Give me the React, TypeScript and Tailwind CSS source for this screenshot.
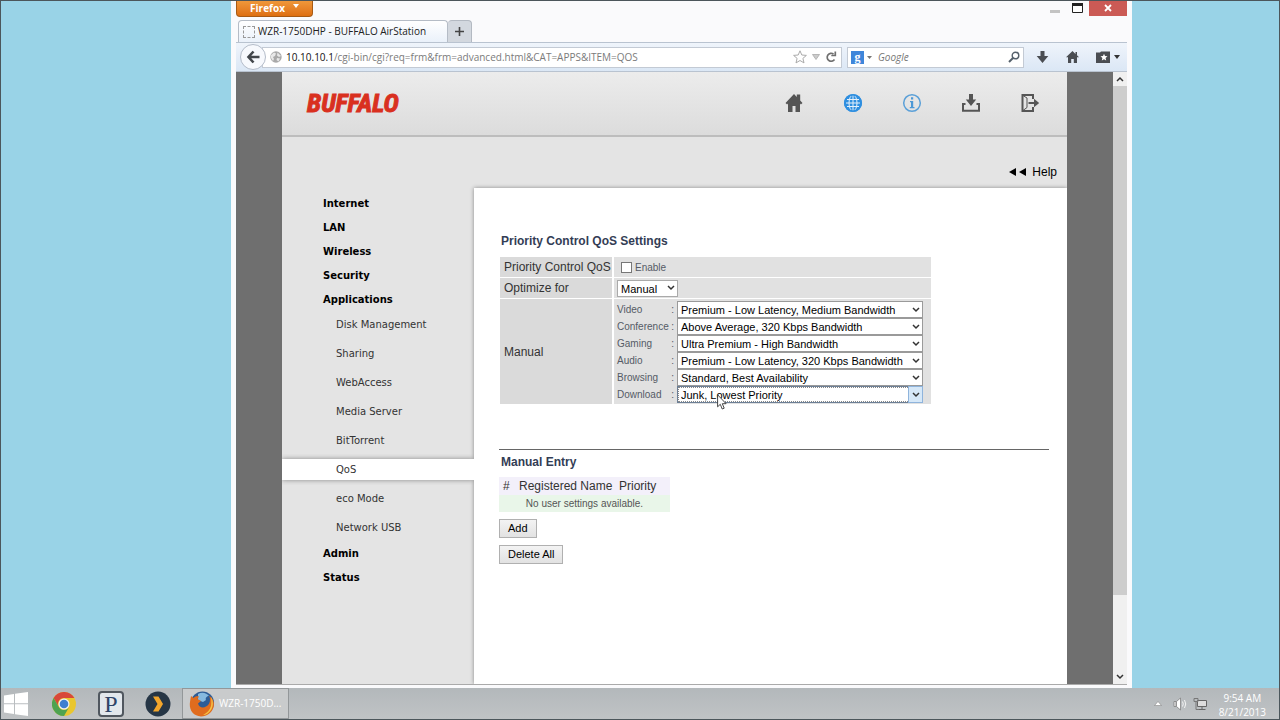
import React from "react";

const ui = "font-['Open_Sans','Noto_Sans',sans-serif]";
const sans = "font-['Liberation_Sans',Arial,sans-serif]";

function Chevron() {
  return (
    <svg viewBox="0 0 8 6" className="h-[6px] w-2" fill="none" stroke="#333" strokeWidth="1.5" aria-hidden="true">
      <path d="M1 1l3 3 3-3" />
    </svg>
  );
}

function TitleBar() {
  return (
    <div className="flex h-5 items-start justify-between">
      <button className="flex h-[17px] w-[77px] items-center justify-center gap-2 rounded-b-sm border border-t-0 border-[#a85a14] bg-linear-to-b from-[#f09a3c] to-[#de6f10] text-[10px] font-bold text-white">
        Firefox
        <svg viewBox="0 0 6 4" className="mb-1 h-1 w-[6px]" fill="#fff" aria-hidden="true">
          <path d="M0 0h6L3 4z" />
        </svg>
      </button>
      <div className="flex h-4 items-stretch">
        <button aria-label="Minimize" className="flex w-5 items-end justify-center pb-[3px]">
          <svg viewBox="0 0 10 3" className="h-[3px] w-[10px]" aria-hidden="true"><path d="M0 0h10v3H0z" fill="#c3c3c3" /></svg>
        </button>
        <button aria-label="Maximize" className="flex w-6 items-center justify-center">
          <svg viewBox="0 0 11 10" className="h-[10px] w-[11px]" aria-hidden="true">
            <path d="M.5.5h10v9H.5z" fill="#fff" stroke="#222" />
            <path d="M0 0h11v3H0z" fill="#222" />
          </svg>
        </button>
        <button aria-label="Close" className="flex w-[38px] items-center justify-center bg-[#cb5a55]">
          <svg viewBox="0 0 8 8" className="h-2 w-2" stroke="#fff" strokeWidth="1.8" aria-hidden="true"><path d="M1 1l6 6M7 1L1 7" /></svg>
        </button>
      </div>
    </div>
  );
}

function TabStrip() {
  return (
    <div className="flex h-[22px] items-end pl-[2px]">
      <div className="flex h-[22px] w-[210px] items-center gap-[3px] rounded-t-sm border border-b-0 border-[#b5bcc6] bg-linear-to-b from-white to-[#eaf1fa] pl-1 text-[10px] text-[#222]">
        <span className="h-3 w-3 border border-dashed border-[#999]" />
        WZR-1750DHP - BUFFALO AirStation
      </div>
      <button aria-label="New tab" className="flex h-[22px] w-6 items-center justify-center rounded-t-sm border border-b-0 border-l-0 border-[#b3b9c2] bg-[#d3d8df]">
        <svg viewBox="0 0 9 9" className="h-[9px] w-[9px]" stroke="#444" strokeWidth="1.6" aria-hidden="true"><path d="M0 4.500H9M4.500 0V9" /></svg>
      </button>
    </div>
  );
}

function NavBar() {
  return (
    <div className="flex h-[30px] items-center border-t border-b border-[#b9c3d0] bg-linear-to-b from-[#eff4fb] to-[#dbe7f5] pr-[7px] pl-1">
      <button aria-label="Back" className="z-10 flex h-[26px] w-[26px] items-center justify-center rounded-full border border-[#b4bcc9] bg-[#f7f9fd]">
        <svg viewBox="0 0 14 14" className="h-[14px] w-[14px]" fill="none" stroke="#42464b" strokeWidth="2.6" aria-hidden="true">
          <path d="M7.500 1.500L2.500 7l5 5.500M3 7h10.500" />
        </svg>
      </button>
      <div className="-ml-1 flex h-[21px] flex-1 items-center border border-[#c3cad4] bg-white pr-1 pl-[7px]">
        <svg viewBox="0 0 12 12" className="h-3 w-3" aria-hidden="true">
          <circle cx="6" cy="6" r="5.700" fill="#a9a9a9" />
          <path d="M1 4l3-2.500 2 1L5 5 3 6l1 2-1 2-2-3zM7.500 1.500L11 5 9 6 7 4.500zM7 7l3 .5-1.500 3L6.500 9z" fill="#e8e8e8" />
        </svg>
        <span className="ml-1 flex-1 truncate text-[10px] text-[#7b7b7b]">
          <span className="text-[#111]">10.10.10.1</span>/cgi-bin/cgi?req=frm&amp;frm=advanced.html&amp;CAT=APPS&amp;ITEM=QOS
        </span>
        <span className="flex items-center gap-[5px]">
          <svg viewBox="0 0 14 14" className="h-[14px] w-[14px]" fill="none" stroke="#aaa" aria-hidden="true">
            <path d="M7 .8l1.800 4.200 4.600.4-3.500 3 1.100 4.500L7 10.500l-4 2.400 1.100-4.500-3.500-3 4.600-.4z" />
          </svg>
          <svg viewBox="0 0 8 6" className="h-[6px] w-2" fill="#ccc" stroke="#aaa" strokeWidth=".8" aria-hidden="true"><path d="M.5.5h7L4 5.500z" /></svg>
          <svg viewBox="0 0 12 12" className="h-3 w-3" fill="none" stroke="#707070" strokeWidth="1.700" aria-hidden="true">
            <path d="M9.500 8.500A4 4 0 1 1 8.500 3M10.300.5v4H6.300" />
          </svg>
        </span>
      </div>
      <div className="ml-[5px] flex h-[21px] w-[177px] items-center border border-[#c3cad4] bg-white px-[3px]">
        <span className="flex h-[13px] w-[13px] items-center justify-center bg-[#3f86da] font-['Liberation_Serif',serif] text-[12px] leading-none font-bold text-white">g</span>
        <svg viewBox="0 0 5 3" className="ml-[3px] h-[3px] w-[5px]" fill="#777" aria-hidden="true"><path d="M0 0h5L2.500 3z" /></svg>
        <input aria-label="Search" placeholder="Google" className="ml-[6px] min-w-0 flex-1 bg-transparent text-[10px] text-[#555] italic outline-none placeholder:text-[#777]" />
        <svg viewBox="0 0 12 12" className="h-3 w-3" fill="none" stroke="#55606b" aria-hidden="true">
          <circle cx="7.500" cy="4.500" r="3.300" strokeWidth="1.400" />
          <path d="M5 7l-4 4" strokeWidth="2" />
        </svg>
      </div>
      <div className="ml-3 flex items-center gap-[17px] text-[#4a4d52]">
        <svg viewBox="0 0 12 12" className="h-3 w-[13px]" fill="currentColor" aria-hidden="true"><path d="M4 0h4v5h3.800L6 12 .2 5H4z" /></svg>
        <svg viewBox="0 0 13 12" className="h-3 w-[13px]" fill="currentColor" aria-hidden="true"><path d="M6.500 0L0 6.300h2V12h3.200V8h2.600v4H11V6.300h2L11 4.300V1H9.500v2z" /></svg>
        <span className="flex items-center gap-1">
          <svg viewBox="0 0 14 12" className="h-3 w-[14px]" aria-hidden="true">
            <path d="M0 1.500h4l1-1h9V12H0z" fill="#4a4d52" />
            <path d="M8 2.800l1 2.300 2.500.2-1.900 1.700.6 2.500L8 8.200 5.800 9.500l.6-2.500-1.900-1.700 2.500-.2z" fill="#fff" />
          </svg>
          <svg viewBox="0 0 6 4" className="h-1 w-[6px]" fill="#333" aria-hidden="true"><path d="M0 0h6L3 4z" /></svg>
        </span>
      </div>
    </div>
  );
}

function PageHeader() {
  return (
    <header className="flex h-[65px] items-center justify-between border-b-2 border-[#bdbdbd] bg-linear-to-b from-[#ececec] to-[#dcdcdc] pr-[27px] pb-px pl-[25px]">
      <span className="font-['Liberation_Sans_Narrow','Roboto_Condensed',sans-serif] text-[26px] leading-none font-bold text-[#d9301f] italic [-webkit-text-stroke:1px_#d9301f]">BUFFALO</span>
      <nav className="flex items-center gap-[39px] text-[#555]">
        <a href="#home" aria-label="Home">
          <svg viewBox="0 0 20 20" className="h-5 w-5" fill="currentColor" aria-hidden="true"><path d="M10 1L1.500 10l1.600 1.400L4 10.500V19h4.500v-6h3v6H16v-8.500l.9.900 1.600-1.400-2.300-2.500V1.500h-3.400v2.400z" /></svg>
        </a>
        <a href="#internet" aria-label="Internet">
          <svg viewBox="0 0 20 20" className="h-5 w-5" fill="none" aria-hidden="true">
            <circle cx="10" cy="10" r="9" fill="#2f8fe0" />
            <g stroke="#e4f0fb" strokeWidth="1"><ellipse cx="10" cy="10" rx="4" ry="8" /><path d="M10 2v16M3 10h14M4 6.500h12M4 13.500h12" /></g>
            <circle cx="10" cy="10" r="8.200" stroke="#2f8fe0" strokeWidth="1.800" />
          </svg>
        </a>
        <a href="#info" aria-label="Information">
          <svg viewBox="0 0 20 20" className="h-5 w-5" fill="none" aria-hidden="true">
            <circle cx="10" cy="10" r="8.300" stroke="#5ba0d8" strokeWidth="1.500" />
            <path d="M9 4.300h2.200v2.200H9zM8 8h3.200v6H12.500v1.200H7.800V14H9V9.200H8z" fill="#4c98d6" />
          </svg>
        </a>
        <a href="#save" aria-label="Save">
          <svg viewBox="0 0 20 20" className="h-5 w-5" aria-hidden="true">
            <path d="M8 1h4v5.500h3.200L10 13 4.800 6.500H8z" fill="currentColor" />
            <path d="M4.500 11H2v6.800h16V11h-2.500" fill="none" stroke="currentColor" strokeWidth="2" />
          </svg>
        </a>
        <a href="#logout" aria-label="Log out">
          <svg viewBox="0 0 20 20" className="h-5 w-5" fill="none" stroke="currentColor" strokeWidth="2" aria-hidden="true">
            <path d="M13 6V2H2.500v16H13v-4" />
            <path d="M3 2.500l4 2.500v9.500L3 17.500" strokeWidth="1" />
            <path d="M8.500 10H16" />
            <path d="M14 5.800l5.200 4.200-5.200 4.200z" fill="currentColor" stroke="none" />
          </svg>
        </a>
      </nav>
    </header>
  );
}

const appItems = ["Disk Management", "Sharing", "WebAccess", "Media Server", "BitTorrent", "QoS", "eco Mode", "Network USB"];

function MainLink({ label }: { label: string }) {
  return (
    <li className="flex h-6 items-center pl-[41px] font-bold text-black">
      <a href={"#" + label}>{label}</a>
    </li>
  );
}

function Sidebar() {
  return (
    <nav className="w-48 shrink-0 pt-[3px] font-['DejaVu_Sans',Verdana,sans-serif] text-[10px]">
      <ul>
        {["Internet", "LAN", "Wireless", "Security", "Applications"].map((l) => <MainLink key={l} label={l} />)}
        <li>
          <ul className="flex flex-col gap-2 py-[3px]">
            {appItems.map((l) => (
              <li
                key={l}
                className={
                  l === "QoS"
                    ? "relative z-10 flex h-[21px] items-center bg-white pl-[54px] text-[#333] shadow-[0_0_5px_#888] [clip-path:inset(-5px_0_-5px_0)]"
                    : "flex h-[21px] items-center pl-[54px] text-[#333]"
                }
              >
                <a href={"#" + l}>{l}</a>
              </li>
            ))}
          </ul>
        </li>
        <MainLink label="Admin" />
        <MainLink label="Status" />
      </ul>
    </nav>
  );
}

const levels = [
  "Premium - Low Latency, Medium Bandwidth",
  "Above Average, 320 Kbps Bandwidth",
  "Ultra Premium - High Bandwidth",
  "Premium - Low Latency, 320 Kbps Bandwidth",
  "Standard, Best Availability",
  "Junk, Lowest Priority",
];
const classes = ["Video", "Conference", "Gaming", "Audio", "Browsing", "Download"];

function Pointer() {
  return (
    <svg viewBox="0 0 10 16" className="absolute top-2 left-10 h-4 w-[10px]" fill="#fff" stroke="#333" strokeWidth=".9" aria-hidden="true">
      <path d="M.6.800v12l2.700-2.500 1.900 4.700 2-.8-1.900-4.500h3.800z" />
    </svg>
  );
}

function ClassRow({ name, index }: { name: string; index: number }) {
  const focused = name === "Download";
  return (
    <div className="flex h-[17px] items-center">
      <label htmlFor={name} className="flex w-[60px] justify-between pr-[3px] text-[10px] text-[#555b66]">
        <span>{name}</span>
        <span>:</span>
      </label>
      <div className="relative w-[246px]">
        <select
          id={name}
          defaultValue={levels[index]}
          className={
            focused
              ? "block h-[17px] w-full appearance-none border border-[#6c7f96] bg-white pb-px pl-[3px] text-[11px] text-black outline-1 -outline-offset-2 outline-dotted outline-[#888]"
              : "block h-[17px] w-full appearance-none border border-[#9a9a9a] bg-white pb-px pl-[3px] text-[11px] text-black"
          }
        >
          {levels.map((o) => <option key={o}>{o}</option>)}
        </select>
        <span
          className={
            focused
              ? "pointer-events-none absolute inset-y-0 right-0 flex w-[15px] items-center justify-center border border-[#8fb4dc] bg-[#d6e8f8]"
              : "pointer-events-none absolute inset-y-0 right-0 flex w-[15px] items-center justify-center"
          }
        >
          <Chevron />
        </span>
        {focused && <Pointer />}
      </div>
    </div>
  );
}

const formButton = "border border-[#b0b0b0] bg-linear-to-b from-[#f3f3f3] to-[#e2e2e2] px-2 text-[11px] text-black h-[19px] leading-none";

function Settings() {
  return (
    <main className="min-w-0 flex-1 bg-white pt-[44px] pr-[18px] pl-[25px] text-[#333] shadow-[0_0_4px_#888] [clip-path:inset(-5px_0_0_-5px)]">
      <h2 className="pl-[2px] text-[12px] leading-[18px] font-bold text-[#333d55]">Priority Control QoS Settings</h2>
      <table className="-ml-px mt-[6px] w-[435px] border-separate border-spacing-x-[2px] border-spacing-y-px text-[12px]">
        <tbody>
          <tr className="h-5">
            <th scope="row" className="w-[112px] bg-[#dadada] py-0 pr-0 pl-1 text-left font-normal whitespace-nowrap">Priority Control QoS</th>
            <td className="bg-[#e1e1e1] py-0 pl-[7px]">
              <label className="flex items-center gap-[3px] text-[10px] text-[#555b66]">
                <input type="checkbox" className="h-[11px] w-[11px] appearance-none border border-[#777] bg-white" />
                Enable
              </label>
            </td>
          </tr>
          <tr className="h-5">
            <th scope="row" className="bg-[#dadada] py-0 pl-1 text-left font-normal"><label htmlFor="optimize">Optimize for</label></th>
            <td className="bg-[#e1e1e1] py-px pl-[3px]">
              <div className="relative w-[61px]">
                <select id="optimize" className="block h-[17px] w-full appearance-none border border-[#aaa] bg-white pb-px pl-[3px] text-[11px] text-black">
                  <option>Manual</option>
                </select>
                <span className="pointer-events-none absolute inset-y-0 right-0 flex w-[15px] items-center justify-center"><Chevron /></span>
              </div>
            </td>
          </tr>
          <tr>
            <th scope="row" className="bg-[#dadada] pl-1 text-left font-normal">Manual</th>
            <td className="bg-[#e1e1e1] pt-[2px] pb-px pl-[3px]">
              {classes.map((c, i) => <ClassRow key={c} name={c} index={i} />)}
            </td>
          </tr>
        </tbody>
      </table>
      <hr className="mt-[44px] border-t border-[#666]" />
      <h2 className="mt-[3px] pl-[2px] text-[12px] leading-[18px] font-bold text-[#333d55]">Manual Entry</h2>
      <table className="mt-[6px] w-[171px] table-fixed border-collapse">
        <thead>
          <tr className="h-[18px] bg-[#f3f0fa] text-left text-[12px]">
            <th className="w-5 py-0 pl-1 font-normal">#</th>
            <th className="w-[100px] py-0 font-normal whitespace-nowrap">Registered Name</th>
            <th className="py-0 font-normal">Priority</th>
          </tr>
        </thead>
        <tbody>
          <tr className="h-[17px] bg-[#e9f6e9] text-center text-[10px] text-[#555]">
            <td colSpan={3} className="py-0">No user settings available.</td>
          </tr>
        </tbody>
      </table>
      <div className="mt-[7px] flex flex-col items-start gap-[7px]">
        <button className={formButton}>Add</button>
        <button className={formButton}>Delete All</button>
      </div>
    </main>
  );
}

function Scrollbar() {
  return (
    <div className="flex w-[14px] shrink-0 flex-col bg-[#f0f0f0]" aria-hidden="true">
      <span className="flex h-[14px] items-center justify-center"><span className="rotate-180"><Chevron /></span></span>
      <div className="flex-[509] bg-[#cdcdcd]" />
      <div className="flex-[75]" />
      <span className="flex h-[14px] items-center justify-center"><Chevron /></span>
    </div>
  );
}

function Browser() {
  return (
    <div className={"mr-[148px] ml-[231px] flex min-h-0 flex-1 flex-col bg-[#fafafc] px-[5px] pb-[3px] " + ui}>
      <TitleBar />
      <TabStrip />
      <NavBar />
      <div className="flex min-h-0 flex-1 border-b border-[#aaa]">
        <div className={"flex min-w-0 flex-1 bg-[#6f6f6f] px-[46px] " + sans}>
          <div className="flex min-w-0 flex-1 flex-col bg-[#e4e4e4]">
            <PageHeader />
            <div className="flex h-[51px] items-center justify-end pt-[18px] pr-[10px]">
              <a href="#help" className="flex items-center gap-[3px] text-[12px] text-black">
                <svg viewBox="0 0 18 8" className="mr-[2px] h-2 w-[18px]" aria-hidden="true"><path d="M7 0v8L0 4zM17 0v8l-7-4z" /></svg>
                Help
              </a>
            </div>
            <div className="flex min-h-0 flex-1">
              <Sidebar />
              <Settings />
            </div>
          </div>
        </div>
        <Scrollbar />
      </div>
    </div>
  );
}

function Taskbar() {
  return (
    <footer className={"flex h-8 items-center justify-between border-b border-[#4c565b] bg-linear-to-b from-[#b3b8bb] to-[#c0c3c5] pr-[14px] pl-1 text-white " + ui}>
      <div className="flex h-full items-center">
        <button aria-label="Start">
          <svg viewBox="0 0 24 24" className="h-6 w-6" fill="#fff" aria-hidden="true"><path d="M0 3.500L10 2v9.300H0zM11 1.800L24 0v11.300H11zM0 12.300h10V22L0 20.500zM11 12.300h13V24l-13-1.800z" /></svg>
        </button>
        <button aria-label="Chrome" className="ml-6">
          <svg viewBox="0 0 24 24" className="h-6 w-6" aria-hidden="true">
            <circle cx="12" cy="12" r="12" fill="#e9c62f" />
            <path d="M1.600 6A12 12 0 0 1 22.400 6H12a6 6 0 0 0-5.200 9z" fill="#d8483a" />
            <path d="M1.600 6A12 12 0 0 0 12 24l5.200-9A6 6 0 0 1 6.800 15z" fill="#4fa351" />
            <circle cx="12" cy="12" r="5.500" fill="#f2f2f2" />
            <circle cx="12" cy="12" r="4.300" fill="#3f7fd0" />
          </svg>
        </button>
        <button className="ml-[22px] flex h-[26px] w-[26px] items-center justify-center rounded border-2 border-[#50575f] bg-[#e2e7ec] font-['Liberation_Serif',serif] text-[24px] leading-none text-[#2d4468]">P</button>
        <button aria-label="Plex" className="ml-[21px]">
          <svg viewBox="0 0 26 26" className="h-[26px] w-[26px]" aria-hidden="true">
            <circle cx="13" cy="13" r="12.500" fill="#263646" />
            <path d="M8 5.500h5.500l4.500 7.500-4.500 7.500H8l4.500-7.500z" fill="#f2a52b" />
          </svg>
        </button>
        <button className="ml-[11px] flex h-full w-[107px] items-center gap-1 border border-[#939799] bg-[#c9cbcc] pl-[6px] text-[10px] text-white">
          <svg viewBox="0 0 26 26" className="h-[26px] w-[26px] shrink-0" aria-hidden="true">
            <circle cx="13.500" cy="12" r="11.500" fill="#2d5c96" />
            <path d="M9 3c4-2.500 9-1 11 2-2 0-4 2-3 4l-3 2-5-2z" fill="#86b9df" />
            <path d="M2 5l2.500 2C6 5 8 5 10 5.500L8.500 8l3.500 2-3 2.500c1 4 5 5 8 3 3-1.500 4-4 4-7 0-2-.5-3-1-4 4 3 6 7 4.500 12C22.500 22 18 25.500 12 25.500 5 25 .5 20 .8 13 1 10 1.500 8 2 5z" fill="#e06c1e" />
            <path d="M22 6c2.500 4 2.500 9 0 13-2 3-5 5-8 5 4-2 7-5 8-9 .6-3 .5-6 0-9z" fill="#f5c344" />
          </svg>
          <span className="whitespace-nowrap">WZR-1750D...</span>
        </button>
      </div>
      <div className="flex h-full items-center">
        <svg viewBox="0 0 8 5" className="h-[5px] w-2" fill="#fff" stroke="#777" strokeWidth=".5" aria-hidden="true"><path d="M4 .5L7.500 4.500h-7z" /></svg>
        <svg viewBox="0 0 14 14" className="ml-[11px] h-[14px] w-[14px]" fill="none" stroke="#f5f5f5" aria-hidden="true">
          <path d="M1 4.500h2v5H1z" fill="#eee" stroke="#777" strokeWidth=".7" />
          <path d="M3.500 4.500l4-3.500v12l-4-3.500z" fill="#fff" stroke="#777" strokeWidth=".7" />
          <path d="M9.500 4.500q1.500 2.500 0 5M11.500 3q2.500 4 0 8" />
        </svg>
        <svg viewBox="0 0 14 14" className="ml-[6px] h-[14px] w-[14px]" fill="none" stroke="#666" aria-hidden="true">
          <path d="M4.500 3.500h9v6h-9zM9 9.500V12M5.500 12.500h7" fill="#ddd" />
          <path d="M1 1.500h4v3H1zM3 4.500v8h3" stroke="#777" />
        </svg>
        <div className="ml-3 pt-[3px] text-center text-[10px] leading-[14px]">
          <div>9:54 AM</div>
          <div>8/21/2013</div>
        </div>
      </div>
    </footer>
  );
}

export default function App() {
  return (
    <div className="flex h-screen flex-col overflow-hidden bg-[#99d3e7] outline-1 -outline-offset-1 outline-[#4c565b]">
      <Browser />
      <Taskbar />
    </div>
  );
}
